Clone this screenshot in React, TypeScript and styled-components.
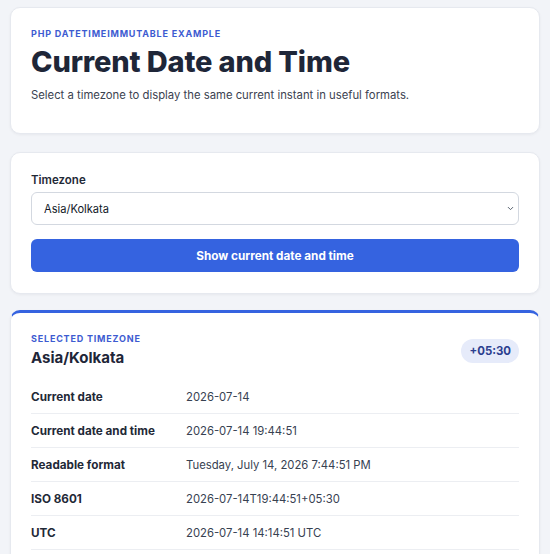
import React, { useState } from 'react';
import styled, { createGlobalStyle } from 'styled-components';
import { ChevronDown } from 'lucide-react';

const GlobalStyle = createGlobalStyle`
  * { box-sizing: border-box; }
  body {
    margin: 0;
    background: #f2f4f8;
    font-family: Inter, "Noto Sans", "Liberation Sans", sans-serif;
    color: #1f2937;
  }
`;

const rows = [
  { label: 'Current date', value: '2026-07-14' },
  { label: 'Current date and time', value: '2026-07-14 19:44:51' },
  { label: 'Readable format', value: 'Tuesday, July 14, 2026 7:44:51 PM' },
  { label: 'ISO 8601', value: '2026-07-14T19:44:51+05:30' },
  { label: 'UTC', value: '2026-07-14 14:14:51 UTC' },
];

const App: React.FC = () => {
  const [zone, setZone] = useState('Asia/Kolkata');

  return (
    <>
      <GlobalStyle />
      <Page>
        <IntroCard>
          <Eyebrow>PHP DateTimeImmutable Example</Eyebrow>
          <Title>Current Date and Time</Title>
          <Lead>Select a timezone to display the same current instant in useful formats.</Lead>
        </IntroCard>

        <FormCard as="form" onSubmit={(e: React.FormEvent) => e.preventDefault()}>
          <Label htmlFor="tz">Timezone</Label>
          <SelectWrap>
            <Select id="tz" value={zone} onChange={e => setZone(e.target.value)}>
              <option>Asia/Kolkata</option>
              <option>UTC</option>
              <option>Europe/London</option>
              <option>America/New_York</option>
            </Select>
            <Chevron size={9} strokeWidth={2.5} />
          </SelectWrap>
          <SubmitButton type="submit">Show current date and time</SubmitButton>
        </FormCard>

        <ResultCard>
          <ResultHeader>
            <div>
              <Eyebrow>Selected timezone</Eyebrow>
              <ZoneName>Asia/Kolkata</ZoneName>
            </div>
            <OffsetBadge>+05:30</OffsetBadge>
          </ResultHeader>
          <Table>
            {rows.map(r => (
              <Row key={r.label}>
                <RowLabel>{r.label}</RowLabel>
                <RowValue>{r.value}</RowValue>
              </Row>
            ))}
          </Table>
        </ResultCard>
      </Page>
    </>
  );
};

export default App;

const Page = styled.main`
  display: flex;
  flex-direction: column;
  gap: 16px;
  padding: 7px 10px 20px;
`;

const Card = styled.section`
  display: flex;
  flex-direction: column;
  background: #ffffff;
  border: 1px solid #e6e9ef;
  border-radius: 10px;
  box-shadow: 0 1px 3px rgba(15, 23, 42, 0.05);
  padding: 20px;
`;

const IntroCard = styled(Card)`
  padding-bottom: 22px;
  margin-bottom: 2px;
`;

const FormCard = styled(Card)`
  padding-top: 19px;
  padding-bottom: 21px;
`;

const Eyebrow = styled.div`
  font-size: 9px;
  font-weight: 700;
  letter-spacing: 0.09em;
  text-transform: uppercase;
  color: #3d5bd1;
  line-height: 12px;
`;

const Title = styled.h1`
  margin: 5px 0 0;
  font-size: 29px;
  font-weight: 800;
  letter-spacing: -0.005em;
  line-height: 34px;
  color: #1e2638;
`;

const Lead = styled.p`
  margin: 8px 0 8px;
  font-size: 11.3px;
  line-height: 16px;
  color: #3b4250;
`;

const Label = styled.label`
  font-size: 11.5px;
  font-weight: 600;
  color: #1f2937;
  line-height: 16px;
`;

const SelectWrap = styled.div`
  position: relative;
  margin-top: 4px;
`;

const Select = styled.select`
  appearance: none;
  width: 100%;
  height: 33px;
  padding: 0 12px;
  border: 1px solid #d3d8e0;
  border-radius: 6px;
  background: #ffffff;
  font-family: inherit;
  font-size: 11.1px;
  color: #111827;
`;

const Chevron = styled(ChevronDown)`
  position: absolute;
  right: 4px;
  top: 12px;
  color: #4b5563;
  pointer-events: none;
`;

const SubmitButton = styled.button`
  margin-top: 14px;
  height: 33px;
  border: none;
  border-radius: 6px;
  background: #3563e0;
  color: #ffffff;
  font-family: inherit;
  font-size: 11.75px;
  font-weight: 700;
  cursor: pointer;
`;

const ResultCard = styled(Card)`
  border-top: 3px solid #3563e0;
  padding-top: 20px;
`;

const ResultHeader = styled.div`
  display: flex;
  justify-content: space-between;
  align-items: center;
  margin-bottom: 12px;
`;

const ZoneName = styled.h2`
  margin: 3px 0 0;
  font-size: 15px;
  font-weight: 700;
  color: #1e2638;
  line-height: 20px;
`;

const OffsetBadge = styled.span`
  padding: 5px 8px;
  border-radius: 999px;
  background: #e6ebfa;
  color: #2c3e8f;
  font-size: 11.4px;
  line-height: 14px;
  font-weight: 700;
`;

const Table = styled.div`
  display: flex;
  flex-direction: column;
`;

const Row = styled.div`
  display: grid;
  grid-template-columns: 155px 1fr;
  align-items: center;
  height: 34px;
  border-bottom: 1px solid #eceef2;
`;

const RowLabel = styled.span`
  font-size: 11.7px;
  font-weight: 700;
  color: #1f2937;
`;

const RowValue = styled.span`
  font-size: 11.3px;
  color: #374151;
`;
